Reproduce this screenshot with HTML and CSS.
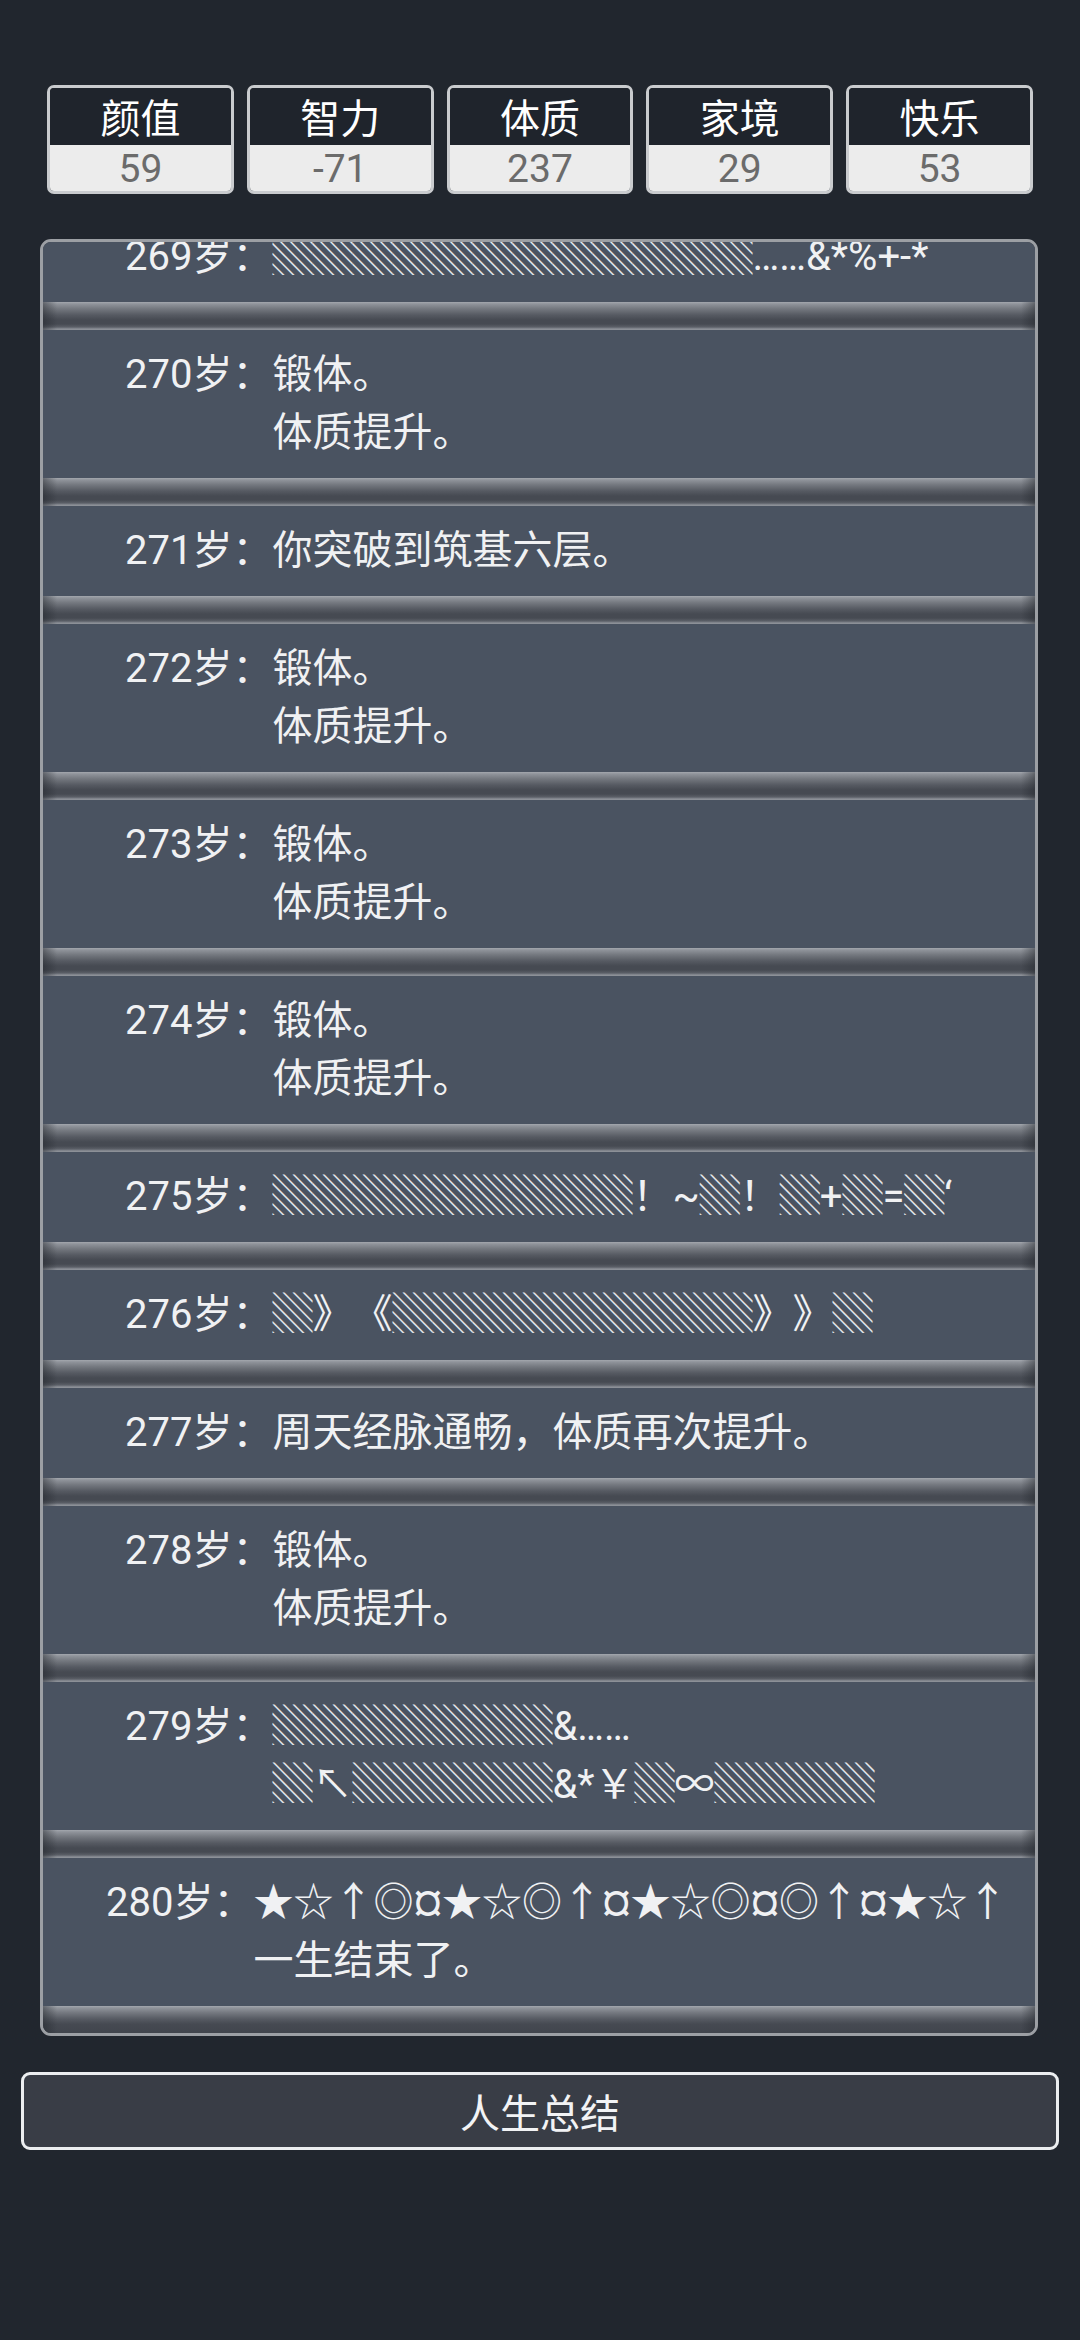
FILE: index.html
```html
<!DOCTYPE html>
<html lang="zh-CN">
<head>
<meta charset="utf-8">
<title>人生重开</title>
<link rel="stylesheet" href="styles.css">
</head>
<body>
<div class="page">
  <div class="stats">
    <div class="stat"><div class="stat-label">颜值</div><div class="stat-value">59</div></div>
    <div class="stat"><div class="stat-label">智力</div><div class="stat-value">-71</div></div>
    <div class="stat"><div class="stat-label">体质</div><div class="stat-value">237</div></div>
    <div class="stat"><div class="stat-label">家境</div><div class="stat-value">29</div></div>
    <div class="stat"><div class="stat-label">快乐</div><div class="stat-value">53</div></div>
  </div>

  <div class="log">
    <div class="log-list">
      <div class="entry"><span class="age">269岁：</span><div class="text"><div class="line"><span class="mask">▒▒▒▒▒▒▒▒▒▒▒▒</span>……&amp;*%+-*</div></div></div>
      <div class="sep"></div>
      <div class="entry"><span class="age">270岁：</span><div class="text"><div class="line">锻体。</div><div class="line">体质提升。</div></div></div>
      <div class="sep"></div>
      <div class="entry"><span class="age">271岁：</span><div class="text"><div class="line">你突破到筑基六层。</div></div></div>
      <div class="sep"></div>
      <div class="entry"><span class="age">272岁：</span><div class="text"><div class="line">锻体。</div><div class="line">体质提升。</div></div></div>
      <div class="sep"></div>
      <div class="entry"><span class="age">273岁：</span><div class="text"><div class="line">锻体。</div><div class="line">体质提升。</div></div></div>
      <div class="sep"></div>
      <div class="entry"><span class="age">274岁：</span><div class="text"><div class="line">锻体。</div><div class="line">体质提升。</div></div></div>
      <div class="sep"></div>
      <div class="entry"><span class="age">275岁：</span><div class="text"><div class="line"><span class="mask">▒▒▒▒▒▒▒▒▒</span>！~<span class="mask">▒</span>！<span class="mask">▒</span>+<span class="mask">▒</span>=<span class="mask">▒</span>‘</div></div></div>
      <div class="sep"></div>
      <div class="entry"><span class="age">276岁：</span><div class="text"><div class="line"><span class="mask">▒</span><span class="cjk">》《</span><span class="mask">▒▒▒▒▒▒▒▒▒</span><span class="cjk">》》</span><span class="mask">▒</span></div></div></div>
      <div class="sep"></div>
      <div class="entry"><span class="age">277岁：</span><div class="text"><div class="line">周天经脉通畅，体质再次提升。</div></div></div>
      <div class="sep"></div>
      <div class="entry"><span class="age">278岁：</span><div class="text"><div class="line">锻体。</div><div class="line">体质提升。</div></div></div>
      <div class="sep"></div>
      <div class="entry"><span class="age">279岁：</span><div class="text"><div class="line"><span class="mask">▒▒▒▒▒▒▒</span>&amp;……</div><div class="line"><span class="mask">▒</span><span class="cjk">↖</span><span class="mask">▒▒▒▒▒</span>&amp;*<span class="cjk">￥</span><span class="mask">▒</span><span class="cjk">∞</span><span class="mask">▒▒▒▒</span></div></div></div>
      <div class="sep"></div>
      <div class="entry entry-wide"><span class="age">280岁：</span><div class="text"><div class="line">★☆↑◎¤★☆◎↑¤★☆◎¤◎↑¤★☆↑</div><div class="line">一生结束了。</div></div></div>
      <div class="sep"></div>
    </div>
  </div>

  <div class="summary-btn">人生总结</div>
</div>
</body>
</html>
```

FILE: styles.css
```css
html, body {
  margin: 0;
  padding: 0;
  background: #21262e;
}

body {
  font-family: Roboto, "Noto Sans CJK SC", sans-serif;
  color: #eef0f2;
  text-spacing-trim: space-all;
}

.page {
  width: 1080px;
  min-height: 2340px;
  padding-top: 85px;
  box-sizing: border-box;
}

.stats {
  display: flex;
  gap: 13px;
  width: 986px;
  margin: 0 auto;
}

.stat {
  flex: 1;
  height: 109px;
  box-sizing: border-box;
  border: 3px solid #c9cbce;
  border-radius: 7px;
  overflow: hidden;
  display: flex;
  flex-direction: column;
}

.stat-label {
  height: 57px;
  line-height: 63px;
  background: #1f242c;
  color: #ffffff;
  font-size: 40px;
  text-align: center;
}

.stat-value {
  flex: 1;
  background: #ececec;
  color: #6b6b6b;
  font-size: 39px;
  line-height: 49px;
  text-align: center;
}

.log {
  margin: 45px 0 0 40px;
  width: 998px;
  height: 1797px;
  box-sizing: border-box;
  border: 3px solid #9c9fa4;
  border-radius: 11px;
  overflow: hidden;
  background: #3b3f47;
}

.log-list {
  margin-top: -30px;
}

.entry {
  display: flex;
  padding: 16px 0 16px 82px;
  background: #4a5361;
  font-size: 40px;
  line-height: 58px;
  color: #f0f1f3;
}

.entry-wide {
  padding-left: 63px;
}

.age {
  white-space: nowrap;
  height: 58px;
}

.line {
  white-space: nowrap;
  height: 58px;
}

.mask,
.cjk {
  font-family: "Noto Sans CJK SC", sans-serif;
  line-height: 1;
}

.mask {
  color: #e4e6ea;
}

.sep {
  height: 28px;
  background:
    linear-gradient(to right, rgba(30, 34, 40, 0.45) 0, rgba(30, 34, 40, 0) 14px, rgba(30, 34, 40, 0) calc(100% - 14px), rgba(30, 34, 40, 0.45) 100%),
    linear-gradient(to bottom, #a4a8ae 0, #8f939a 2px, #73777e 7px, #565a62 13px, #464a52 18px, #464a52 22px, #5b5f67 25px, #8c9097 27px, #8c9097 28px);
}

.log-list .sep:last-child {
  background:
    linear-gradient(to right, rgba(30, 34, 40, 0.45) 0, rgba(30, 34, 40, 0) 14px, rgba(30, 34, 40, 0) calc(100% - 14px), rgba(30, 34, 40, 0.45) 100%),
    linear-gradient(to bottom, #a4a8ae 0, #8f939a 2px, #73777e 7px, #565a62 13px, #464a52 18px, #40444c 28px);
}

.summary-btn {
  margin: 36px 0 0 21px;
  width: 1038px;
  height: 78px;
  box-sizing: border-box;
  border: 3px solid #eceef0;
  border-radius: 9px;
  background: #393d46;
  color: #f2f3f5;
  font-size: 40px;
  display: flex;
  align-items: center;
  justify-content: center;
}
```
